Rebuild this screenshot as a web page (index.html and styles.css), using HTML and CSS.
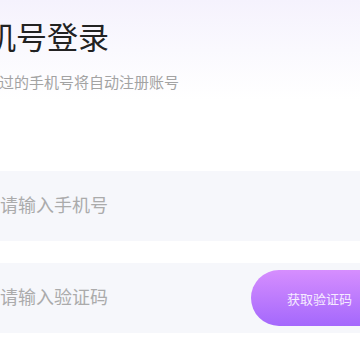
FILE: index.html
```html
<!DOCTYPE html>
<html lang="zh-CN">
<head>
<meta charset="utf-8">
<title>手机号登录</title>
<link rel="stylesheet" href="styles.css">
</head>
<body>
<div class="page">
  <h1 class="title">手机号登录</h1>
  <p class="subtitle">未注册过的手机号将自动注册账号</p>
  <div class="field">
    <input class="input" type="tel" placeholder="请输入手机号">
  </div>
  <div class="field">
    <input class="input" type="text" placeholder="请输入验证码">
    <button class="code-btn" type="button">获取验证码</button>
  </div>
</div>
</body>
</html>
```
FILE: styles.css
```css
html, body {
  margin: 0;
  padding: 0;
  width: 360px;
  height: 360px;
  overflow: hidden;
  background: linear-gradient(180deg, #f5f2fd 0px, #faf9fe 50px, #ffffff 100px);
  font-family: "Noto Sans CJK SC", "Noto Sans", sans-serif;
}

.page {
  margin-left: -46px;
  width: 452px;
  padding: 20px 0 0 0;
  box-sizing: border-box;
}

.title {
  margin: 0;
  font-size: 31px;
  line-height: 31px;
  font-weight: 400;
  color: #222222;
}

.subtitle {
  margin: 23px 0 0 0;
  font-size: 15px;
  line-height: 15px;
  color: #a3a3a3;
}

.field {
  display: flex;
  align-items: center;
  height: 70px;
  background: #f6f7fb;
  margin-top: 22px;
  padding: 0 18px 0 46px;
  box-sizing: border-box;
}

.field:first-of-type {
  margin-top: 82px;
}

.input {
  flex: 1;
  min-width: 0;
  border: 0;
  outline: 0;
  background: transparent;
  font-family: inherit;
  font-size: 18px;
  line-height: 22px;
  color: #333;
  padding: 0 0 5px 0;
}

.input::placeholder {
  color: #ababab;
}

.code-btn {
  flex: none;
  height: 56px;
  padding: 0 36px;
  border: 0;
  border-radius: 28px;
  background: linear-gradient(180deg, #d68efe 0%, #a468fc 100%);
  color: #f6ecff;
  font-family: inherit;
  font-size: 13px;
  line-height: 13px;
}
```
